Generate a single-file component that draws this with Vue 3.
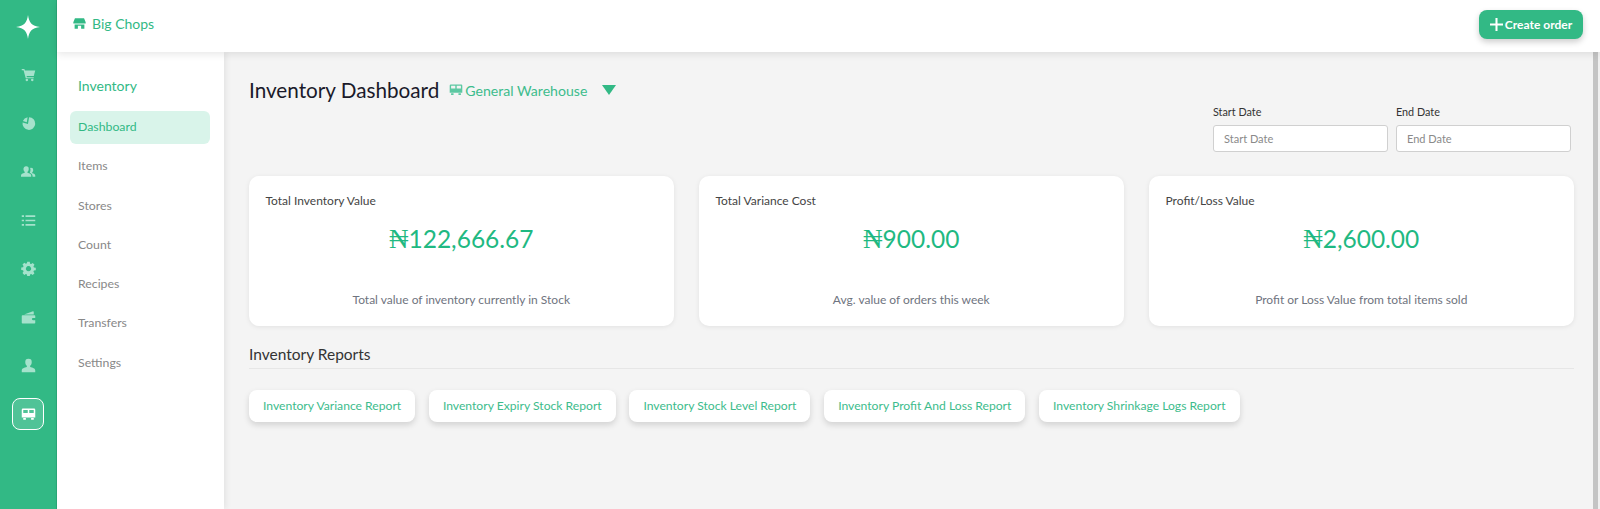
<script setup>
const menu = ['Dashboard', 'Items', 'Stores', 'Count', 'Recipes', 'Transfers', 'Settings']
const cards = [
  { title: 'Total Inventory Value', value: '122,666.67', note: 'Total value of inventory currently in Stock' },
  { title: 'Total Variance Cost', value: '900.00', note: 'Avg. value of orders this week' },
  { title: 'Profit/Loss Value', value: '2,600.00', note: 'Profit or Loss Value from total items sold' }
]
const reports = [
  'Inventory Variance Report',
  'Inventory Expiry Stock Report',
  'Inventory Stock Level Report',
  'Inventory Profit And Loss Report',
  'Inventory Shrinkage Logs Report'
]
const railIcons = [
  { d: 'M1 2.500h3.500l.7 2H19l-2 7.500H7.500l.3 1.500H17V15H6.300L3.400 4.200H1z M7.800 15.500a1.700 1.700 0 1 0 .01 0z M15 15.500a1.700 1.700 0 1 0 .01 0z' },
  { d: 'M10.800 1.500a8.500 8.500 0 1 1-8.700 7.200L9.300 10.700 10.800 1.500z M2.500 6.800A8.500 8.500 0 0 1 8.800 1.600L7.700 8.200z' },
  { d: 'M7 3a3.300 3.300 0 0 1 3.300 3.500c0 1.700-.8 3.200-1.700 3.900v1.200c2.800.6 5 1.700 5 3.600V17H0v-1.800c0-1.900 2.200-3 5-3.600v-1.200C4.100 9.700 3.300 8.200 3.300 6.500A3.300 3.300 0 0 1 7 3z M13.500 5a2.800 2.800 0 0 1 2.800 3c0 1.400-.7 2.600-1.400 3.200v1c2.500.5 4.100 1.400 4.100 3V17h-3.500c0-2.800-1.400-4.200-3.700-5.300.5-1.200 1-2.700.8-4.900-.1-.6-.3-1-.5-1.300.4-.3.900-.5 1.400-.5z' },
  { d: 'M1 3h3v2.200H1z M6 3h13v2.200H6z M1 8.900h3v2.200H1z M6 8.900h13v2.200H6z M1 14.800h3V17H1z M6 14.800h13V17H6z' },
  { d: 'M8.300 1h3.400l.4 2.500 1.500.6 2-1.400 2.400 2.400-1.400 2 .6 1.500 2.500.4v3.400l-2.500.4-.6 1.500 1.400 2-2.400 2.400-2-1.400-1.500.6-.4 2.500H8.300l-.4-2.500-1.500-.6-2 1.400L2 15.900l1.400-2-.6-1.500L.3 12V8.600l2.500-.4.6-1.500-1.400-2L4.400 2.300l2 1.400 1.500-.6z M10 6.800a3.500 3.500 0 1 0 .01 0z', evenodd: true },
  { d: 'M2 7h16a1 1 0 0 1 1 1v2.500h-3a1.500 1.500 0 0 0 0 3h3V17a1 1 0 0 1-1 1H2a1 1 0 0 1-1-1V8a1 1 0 0 1 1-1z M4 6l12-4.500a1 1 0 0 1 1 1V6z' },
  { d: 'M10 1a4.300 4.300 0 0 1 4.300 4.600c0 2.200-1 4-2.100 4.800v1.700c3.200.7 6.800 1.900 6.800 4.400V19H1v-2.500c0-2.500 3.600-3.700 6.800-4.400v-1.700C6.700 9.600 5.700 7.800 5.700 5.600A4.300 4.300 0 0 1 10 1z' }
]
const warehouse = 'M1 3.500A1.500 1.500 0 0 1 2.500 2h15A1.500 1.500 0 0 1 19 3.500V14H1z M3 4v4h6V4z M11 4v4h6V4z M3 14.500h3.500V17H3z M13.500 14.500H17V17h-3.500z'
</script>

<template>
  <div class="app">
    <aside class="rail">
      <svg class="logo" viewBox="0 0 26 26"><path d="M13 0c1 8 4 12 13 13-9 1-12 5-13 13-1-8-4-12-13-13 9-1 12-5 13-13z" fill="#fff" /></svg>
      <div v-for="(icon, i) in railIcons" :key="i" class="rail-item">
        <svg viewBox="0 0 20 20" class="rail-icon"><path :d="icon.d" :fill-rule="icon.evenodd ? 'evenodd' : 'nonzero'" /></svg>
      </div>
      <div class="rail-item current">
        <svg viewBox="0 0 20 20" class="rail-icon on"><path :d="warehouse" fill-rule="evenodd" /></svg>
      </div>
    </aside>
    <div class="body">
      <header class="top">
        <div class="brand">
          <svg viewBox="0 0 20 20" class="brand-icon"><path d="M3 2h14l2.500 6v2h-19V8z M2.500 11.500h15V18h-5v-4.500h-5V18h-5z" /></svg>
          <span>Big Chops</span>
        </div>
        <button class="create">
          <svg viewBox="0 0 14 14" class="plus"><path d="M7 0v14M0 7h14" /></svg>
          Create order
        </button>
      </header>
      <div class="under">
        <nav class="side">
          <h3>Inventory</h3>
          <a v-for="(m, i) in menu" :key="m" :class="['side-link', { active: i === 0 }]">{{ m }}</a>
        </nav>
        <main class="main">
          <div class="head">
            <div class="title-row">
              <h1>Inventory Dashboard</h1>
              <svg viewBox="0 0 20 20" class="wh-icon"><path :d="warehouse" fill-rule="evenodd" /></svg>
              <span class="wh">General Warehouse</span>
              <span class="tri"></span>
            </div>
            <div class="dates">
              <label>Start Date<input placeholder="Start Date" /></label>
              <label>End Date<input placeholder="End Date" /></label>
            </div>
          </div>
          <section class="cards">
            <article v-for="c in cards" :key="c.title" class="card">
              <div class="card-title">{{ c.title }}</div>
              <div class="card-value"><span class="naira">₦</span>{{ c.value }}</div>
              <div class="card-note">{{ c.note }}</div>
            </article>
          </section>
          <h2>Inventory Reports</h2>
          <div class="reports">
            <a v-for="r in reports" :key="r" class="report">{{ r }}</a>
          </div>
        </main>
        <div class="scroll"><i></i></div>
      </div>
    </div>
  </div>
</template>

<style>
html, body { margin: 0; overflow: hidden; }
</style>

<style scoped>
.app { display: flex; height: 509px; font-family: Lato, "Open Sans", sans-serif; background: #f4f4f4; overflow: hidden; }
.rail { width: 56px; flex: none; background: #32b985; border-right: 1px solid #2aa878; display: flex; flex-direction: column; align-items: center; box-sizing: content-box; }
.logo { width: 24px; height: 26px; margin: 14px 0 18.500px; }
.rail-item { width: 32px; height: 32px; margin-bottom: 16.500px; display: flex; align-items: center; justify-content: center; border-radius: 8px; box-sizing: border-box; }
.rail-icon { width: 15px; height: 15px; fill: #a5e2cc; }
.rail-icon.on { fill: #fff; }
.current { background: rgba(255,255,255,.15); border: 1px solid #fff; }
.body { flex: 1; display: flex; flex-direction: column; min-width: 0; }
.top { height: 52px; flex: none; background: #fff; box-shadow: 0 2px 8px rgba(0,0,0,.1); display: flex; align-items: center; justify-content: space-between; padding: 0 17px 0 16px; position: relative; z-index: 2; }
.brand { display: flex; align-items: center; gap: 6px; color: #32b985; font-size: 14px; margin-top: -5px; }
.brand-icon { width: 13px; height: 13px; fill: #32b985; }
.create { height: 29px; width: 104px; border: 0; border-radius: 8px; background: #32b985; color: #fff; font: 700 12px Lato, sans-serif; display: flex; align-items: center; justify-content: center; gap: 2px; box-shadow: 0 3px 6px rgba(0,0,0,.2); margin-top: -3px; padding: 0; }
.plus { width: 13px; height: 13px; stroke: #fff; stroke-width: 2.200; fill: none; }
.under { flex: 1; display: flex; min-height: 0; }
.side { width: 167px; flex: none; background: #fff; padding: 26px 14px 0 13px; box-sizing: border-box; box-shadow: 2px 0 6px rgba(0,0,0,.07); position: relative; }
.side h3 { margin: 0 0 17px 8px; font-weight: 400; font-size: 14px; line-height: 16px; color: #32b985; }
.side-link { display: block; height: 33px; line-height: 32px; padding-left: 8px; margin-bottom: 6.300px; font-size: 12.300px; color: #888; border-radius: 6px; }
.side-link.active { color: #32b985; background: #d9f4ea; }
.main { flex: 1; padding: 27px 19px 0 25px; min-width: 0; }
.head { position: relative; height: 97px; }
.title-row { display: flex; align-items: center; height: 22px; }
h1 { margin: 0 10px 0 0; font-weight: 400; font-size: 20.700px; color: #1a1a2a; white-space: nowrap; }
.wh-icon { width: 14px; height: 14px; fill: #5cc8a2; margin-right: 2px; }
.wh { color: #3dbc8c; font-size: 14.100px; }
.tri { width: 0; height: 0; margin-left: 15px; border-left: 7px solid transparent; border-right: 7px solid transparent; border-top: 10px solid #32b985; }
.dates { position: absolute; right: 3px; top: 26px; display: flex; gap: 8px; }
.dates label { display: block; width: 175px; font-size: 10.800px; color: #333; line-height: 13px; }
.dates input { display: block; box-sizing: border-box; width: 100%; height: 27px; margin-top: 7px; padding: 0 10px; border: 1px solid #d0d0d0; border-radius: 3px; background: #fff; font: 11px Lato, sans-serif; outline: none; }
.dates input::placeholder { color: #8a8a8a; }
.cards { display: flex; gap: 25px; }
.card { flex: 1; height: 150px; background: #fff; border-radius: 10px; box-shadow: 0 1px 5px rgba(0,0,0,.08); padding: 17px 17px 18px 16.500px; box-sizing: border-box; position: relative; display: flex; flex-direction: column; }
.card-title { font-size: 12px; color: #444; line-height: 16px; }
.card-value { text-align: center; margin-top: 14px; font-size: 24.500px; line-height: 32px; color: #1fb982; }
.naira { font-family: "Liberation Serif", serif; font-size: 27px; }
.card-note { margin-top: auto; text-align: center; font-size: 12px; color: #6f7480; line-height: 16px; }
h2 { margin: 18px 0 0; font-weight: 400; font-size: 15.500px; line-height: 20px; color: #333; padding-bottom: 4px; border-bottom: 1px solid #e6e6e6; }
.reports { display: flex; gap: 13.700px; margin-top: 21px; }
.report { height: 32px; line-height: 32px; padding: 0 14px; background: #fff; border-radius: 8px; font-size: 12.150px; color: #3dbc8c; box-shadow: 0 3px 6px rgba(0,0,0,.14); white-space: nowrap; }
.scroll { width: 7px; flex: none; background: #f0f0f0; }
.scroll i { display: block; width: 5px; height: 100%; background: #c4c4c4; }
</style>
